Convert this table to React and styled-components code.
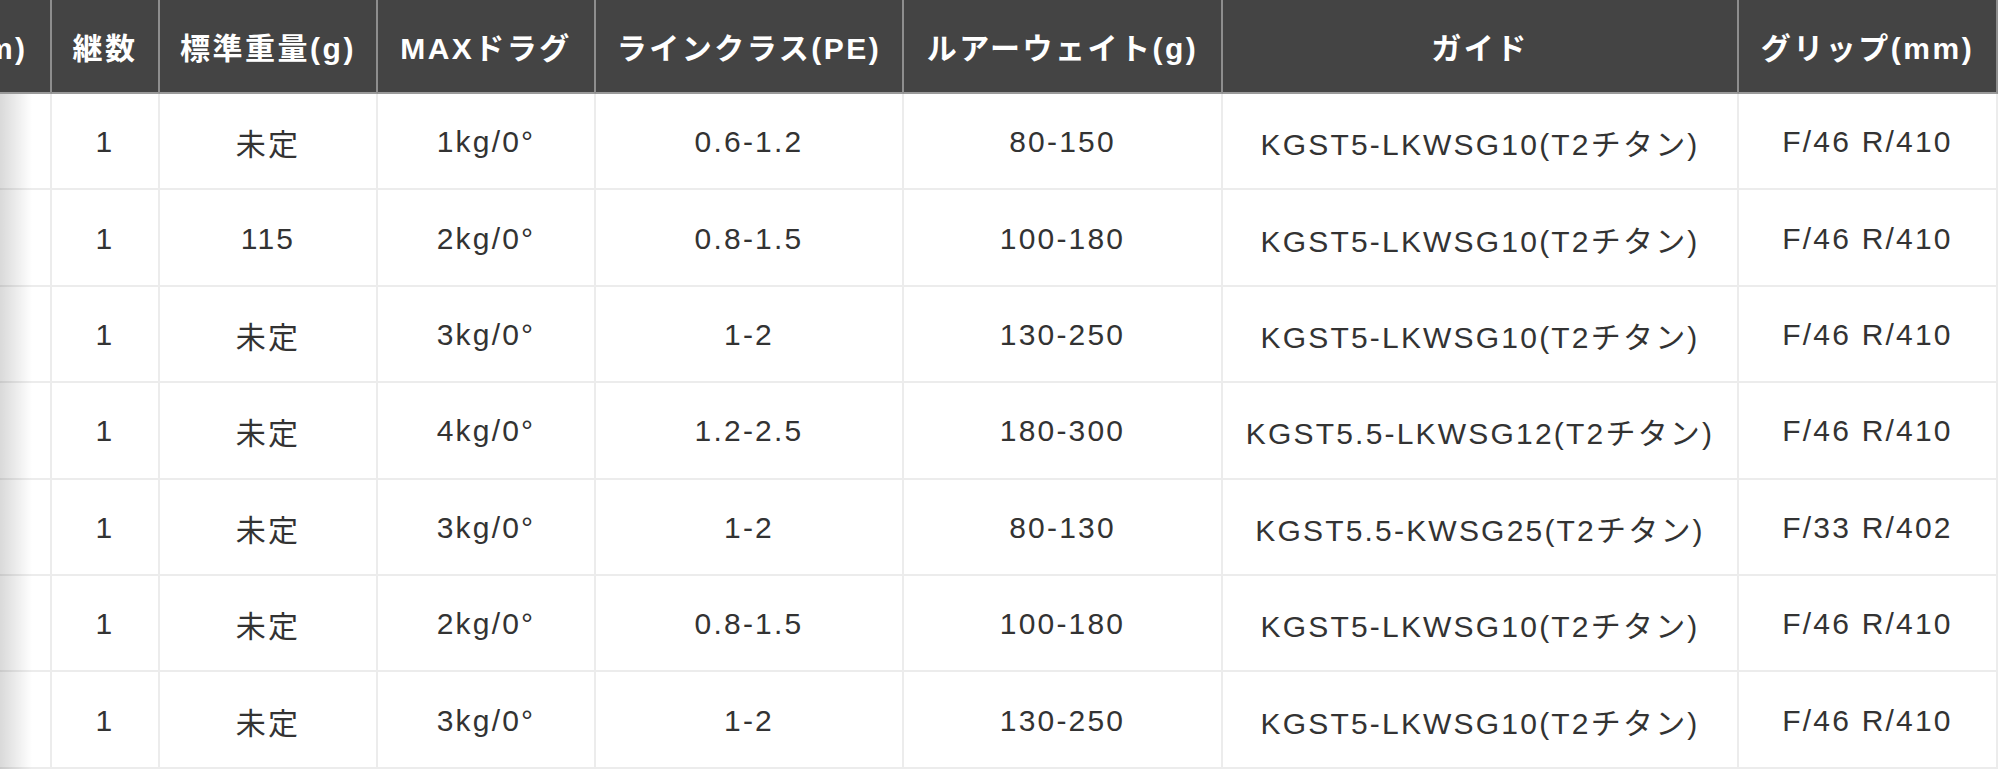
import React, { useLayoutEffect, useRef } from 'react'
import styled, { createGlobalStyle } from 'styled-components'

const GlobalStyle = createGlobalStyle`
    html, body {
        margin: 0;
        padding: 0;
        background: #fff;
    }
    body {
        font-family: "Liberation Sans", "Noto Sans CJK JP", sans-serif;
    }
`

const columns = [166, 108, 218, 218, 308, 319, 516, 259]

const headers = ['全長(m)', '継数', '標準重量(g)', 'MAXドラグ', 'ラインクラス(PE)', 'ルアーウェイト(g)', 'ガイド', 'グリップ(mm)']

const rows = [
    ['', '1', '未定', '1kg/0°', '0.6-1.2', '80-150', 'KGST5-LKWSG10(T2チタン)', 'F/46 R/410'],
    ['', '1', '115', '2kg/0°', '0.8-1.5', '100-180', 'KGST5-LKWSG10(T2チタン)', 'F/46 R/410'],
    ['', '1', '未定', '3kg/0°', '1-2', '130-250', 'KGST5-LKWSG10(T2チタン)', 'F/46 R/410'],
    ['', '1', '未定', '4kg/0°', '1.2-2.5', '180-300', 'KGST5.5-LKWSG12(T2チタン)', 'F/46 R/410'],
    ['', '1', '未定', '3kg/0°', '1-2', '80-130', 'KGST5.5-KWSG25(T2チタン)', 'F/33 R/402'],
    ['', '1', '未定', '2kg/0°', '0.8-1.5', '100-180', 'KGST5-LKWSG10(T2チタン)', 'F/46 R/410'],
    ['', '1', '未定', '3kg/0°', '1-2', '130-250', 'KGST5-LKWSG10(T2チタン)', 'F/46 R/410'],
]

const SpecTable = () => {
    const scrollRef = useRef(null)

    // the table is shown scrolled a little to the right, like on the site
    useLayoutEffect(() => {
        if (scrollRef.current) scrollRef.current.scrollLeft = 114
    }, [])

    return (
        <Wrapper>
            <ScrollArea ref={scrollRef}>
                <Grid>
                    {headers.map(h => (
                        <HeadCell key={h}>{h}</HeadCell>
                    ))}
                    {rows.map((row, i) =>
                        row.map((value, j) => (
                            <Cell key={i + '-' + j}>{value}</Cell>
                        ))
                    )}
                </Grid>
            </ScrollArea>
            <Shadow />
        </Wrapper>
    )
}

const App = () => (
    <>
        <GlobalStyle />
        <SpecTable />
    </>
)

// Styled Components

const Wrapper = styled.div`
    position: relative;
    width: 1998px;
`

const ScrollArea = styled.div`
    width: 100%;
    overflow-x: auto;
    scrollbar-width: none;
    &::-webkit-scrollbar {
        display: none;
    }
`

const Grid = styled.div`
    display: grid;
    grid-template-columns: ${columns.map(c => c + 'px').join(' ')};
    grid-template-rows: 94px;
    grid-auto-rows: 96.4px;
    width: ${columns.reduce((a, b) => a + b, 0)}px;
`

const HeadCell = styled.div`
    box-sizing: border-box;
    display: flex;
    align-items: center;
    justify-content: center;
    background: #444444;
    color: #fff;
    font-size: 30px;
    font-weight: 700;
    letter-spacing: 2.5px;
    white-space: nowrap;
    border-right: 2px solid #8e8e8e;
    border-bottom: 2px solid #9a9a9a;
`

const Cell = styled.div`
    box-sizing: border-box;
    display: flex;
    align-items: center;
    justify-content: center;
    padding-top: 2px;
    color: #333;
    font-size: 30px;
    letter-spacing: 2.2px;
    white-space: nowrap;
    border-right: 2px solid #ececec;
    border-bottom: 2px solid #ececec;
`

const Shadow = styled.div`
    position: absolute;
    left: 0;
    top: 94px;
    bottom: 0;
    width: 32px;
    pointer-events: none;
    background: linear-gradient(to right, rgba(0, 0, 0, 0.15), rgba(0, 0, 0, 0));
`

export default App
